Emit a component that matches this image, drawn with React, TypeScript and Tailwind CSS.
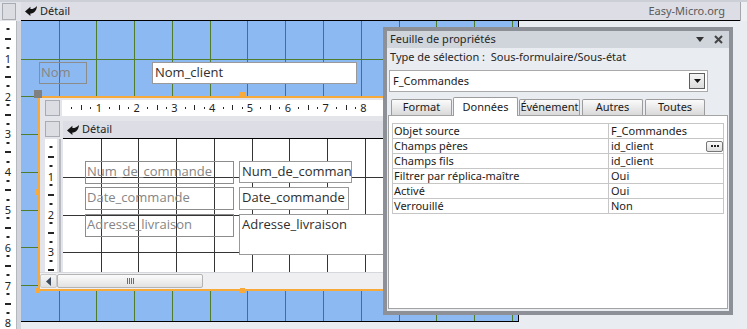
import React from "react";

const STEP = 37.8;
const range = (n: number) => Array.from({ length: n }, (_, i) => i);

function Corner({ className = "" }: { className?: string }) {
  return <div className={`shrink-0 border border-[#a9abb3] bg-[#dcdde3] ${className}`} />;
}

function SectionIcon() {
  return (
    <svg width="12" height="10" viewBox="0 0 12 10" className="shrink-0">
      <path d="M0 5.6 L5.4 0.8 V3.1 C8.2 3.1 10.4 1.9 12 0 C11.6 5 8.9 7.3 5.4 7.6 V10 Z" fill="#141414" />
    </svg>
  );
}

// règle verticale : tirets + chiffres
function VRuler({ n, labels }: { n: number; labels: number }) {
  return (
    <>
      {range(n).flatMap((k) =>
        [1, 2, 3].map((j) => (
          <div
            key={`${k}-${j}`}
            className={`absolute left-1/2 h-[2px] -translate-x-1/2 bg-[#262626] ${j === 2 ? "w-[6px]" : "w-[3px]"}`}
            style={{ top: k * STEP + j * 9.45 - 2 }}
          />
        ))
      )}
      {range(labels).map((k) => (
        <span
          key={k}
          className="absolute left-0 w-full text-center text-[11px] leading-[12px] text-[#222]"
          style={{ top: (k + 1) * STEP - 6 }}
        >
          {k + 1}
        </span>
      ))}
    </>
  );
}

function HRuler({ n }: { n: number }) {
  return (
    <>
      {range(n).flatMap((k) =>
        [1, 2, 3].map((j) => (
          <div
            key={`${k}-${j}`}
            className={`absolute w-[1px] bg-[#262626] ${j === 2 ? "top-[5px] h-[5px]" : "top-[7px] h-[2px]"}`}
            style={{ left: k * STEP + j * 9.45 }}
          />
        ))
      )}
      {range(n).map((k) => (
        <span
          key={k}
          className="absolute top-[1px] w-[12px] text-center text-[11px] leading-[14px] text-[#222]"
          style={{ left: (k + 1) * STEP - 7 }}
        >
          {k + 1}
        </span>
      ))}
    </>
  );
}

function Grid({ w, h, x0, y0, color }: { w: number; h: number; x0: number; y0: number; color: string }) {
  const xs: number[] = [];
  const ys: number[] = [];
  for (let k = 1; x0 + STEP * k < w; k++) xs.push(Math.round(x0 + STEP * k));
  for (let k = 1; y0 + STEP * k < h; k++) ys.push(Math.round(y0 + STEP * k));
  return (
    <svg width={w} height={h} className="absolute left-0 top-0">
      {xs.map((x) => (
        <rect key={`x${x}`} x={x} y={0} width={1} height={h} fill={color} />
      ))}
      {ys.map((y) => (
        <rect key={`y${y}`} x={0} y={y} width={w} height={1} fill={color} />
      ))}
    </svg>
  );
}

const FORM_FONT = "font-['Open_Sans',sans-serif] text-[13px] leading-[18px]";

function Label({ text, className }: { text: string; className: string }) {
  return (
    <div className={`absolute overflow-hidden whitespace-nowrap border border-[#8c8c8c] pl-[1px] text-[#858585] ${FORM_FONT} ${className}`}>
      {text}
    </div>
  );
}

function TextBox({ text, className }: { text: string; className: string }) {
  return (
    <div className={`absolute overflow-hidden whitespace-nowrap border border-[#999] bg-white pl-[2px] text-[#2e2e2e] ${FORM_FONT} ${className}`}>
      {text}
    </div>
  );
}

const ROWS = [
  ["Objet source", "F_Commandes"],
  ["Champs pères", "id_client"],
  ["Champs fils", "id_client"],
  ["Filtrer par réplica-maître", "Oui"],
  ["Activé", "Oui"],
  ["Verrouillé", "Non"],
];

const TABS = [
  { label: "Format", w: "w-[61px]", ml: "ml-0" },
  { label: "Données", w: "w-[65px]", ml: "ml-[1px]", active: true },
  { label: "Événement", w: "w-[61px]", ml: "ml-[1px]" },
  { label: "Autres", w: "w-[61px]", ml: "ml-[2px]" },
  { label: "Toutes", w: "w-[60px]", ml: "ml-[2px]" },
];

function PropertySheet() {
  return (
    <div className="absolute left-[383px] top-[27px] flex h-[288px] w-[350px] flex-col border-4 border-[#8d9096] bg-[#e9ecf0]">
      <div className="flex h-[17px] items-center bg-[#d0d5dc] pl-[3px] pr-[6px] text-[#262626]">
        <span>Feuille de propriétés</span>
        <svg width="8" height="5" viewBox="0 0 8 5" className="ml-auto">
          <path d="M0 0 H8 L4 5 Z" fill="#333" />
        </svg>
        <svg width="9" height="9" viewBox="0 0 9 9" className="ml-[10px]">
          <path d="M1 1 L8 8 M8 1 L1 8" stroke="#444" strokeWidth="2" />
        </svg>
      </div>
      <div className="flex h-[18px] items-center pl-[3px] text-[#262626]">
        Type de sélection :&nbsp;&nbsp;Sous-formulaire/Sous-état
      </div>
      <div className="ml-[2px] mt-[4px] flex h-[22px] w-[319px] items-center border border-[#a9a9a9] bg-white pl-[3px] pr-[2px]">
        <span>F_Commandes</span>
        <div className="ml-auto flex h-[16px] w-[16px] items-center justify-center border border-[#5e5e5e] bg-gradient-to-b from-[#f4f4f4] to-[#dcdcdc]">
          <svg width="7" height="4" viewBox="0 0 7 4">
            <path d="M0 0 H7 L3.5 4 Z" fill="#111" />
          </svg>
        </div>
      </div>
      <div className="mt-[4px] flex h-[19px] items-end pl-[4px]">
        {TABS.map((t) =>
          t.active ? (
            <div
              key={t.label}
              className={`relative z-10 -mb-px flex h-[19px] items-start justify-center rounded-t-[2px] border border-b-0 border-[#9c9c9c] bg-white pt-[1px] ${t.w} ${t.ml}`}
            >
              {t.label}
            </div>
          ) : (
            <div
              key={t.label}
              className={`flex h-[16px] items-center justify-center rounded-t-[2px] border border-b-0 border-[#9c9c9c] bg-gradient-to-b from-[#fbfbfb] to-[#d9d9d9] ${t.w} ${t.ml}`}
            >
              {t.label}
            </div>
          )
        )}
      </div>
      <div className="mx-[1px] h-[194px] border border-[#a3a3a3] bg-white pl-[3px] pt-[7px]">
        <div className="w-[332px] border-x border-t border-[#c6c6c6]">
          {ROWS.map(([k, v], i) => (
            <div key={k} className="flex h-[15px] border-b border-[#c6c6c6] leading-[14px]">
              <div className="w-[216px] border-r border-[#c6c6c6] pl-[1px]">{k}</div>
              <div className="flex flex-1 items-center pl-[2px]">
                <span>{v}</span>
                {i === 1 && (
                  <div className="ml-auto flex h-[11px] w-[17px] items-center justify-center gap-[1px] rounded-[2px] border border-[#777] bg-gradient-to-b from-[#fafafa] to-[#dedede]">
                    <div className="h-[2px] w-[2px] bg-[#222]" />
                    <div className="h-[2px] w-[2px] bg-[#222]" />
                    <div className="h-[2px] w-[2px] bg-[#222]" />
                  </div>
                )}
              </div>
            </div>
          ))}
        </div>
      </div>
    </div>
  );
}

function SubForm() {
  return (
    <div className="absolute left-[17px] top-[75px] flex h-[195px] w-[400px] flex-col border-2 border-[#f7a93a] bg-[#e4e5eb]">
      {/* règle horizontale */}
      <div className="mt-[2px] flex h-[16px] pl-[5px]">
        <Corner className="h-[16px] w-[15px]" />
        <div className="relative ml-[2px] flex-1 overflow-hidden bg-white">
          <HRuler n={8} />
        </div>
      </div>
      {/* en-tête de section */}
      <div className="mt-[5px] flex h-[18px] pl-[5px]">
        <Corner className="h-[16px] w-[15px]" />
        <div className="ml-[3px] flex flex-1 items-center border-b border-black bg-[#dcdde5] pl-[4px]">
          <SectionIcon />
          <span className="ml-[3px] text-[#1e1e1e]">Détail</span>
        </div>
      </div>
      {/* zone de détail */}
      <div className="flex h-[133px] pl-[5px]">
        <div className="relative w-[12px] overflow-hidden bg-white">
          <VRuler n={4} labels={3} />
        </div>
        <div className="w-[2px] bg-[#e4e5eb]" />
        <div className="w-[2px] bg-[#b8bac2]" />
        <div className="w-[2px] bg-[#e4e5eb]" />
        <div className="relative flex-1 overflow-hidden bg-white">
          <Grid w={330} h={133} x0={-0.3} y0={0} color="#353535" />
          <Label text="Num_de_commande" className="left-[22px] top-[22px] h-[23px] w-[149px]" />
          <TextBox text="Num_de_commande" className="left-[176px] top-[22px] h-[22px] w-[113px]" />
          <Label text="Date_commande" className="left-[22px] top-[48px] h-[23px] w-[149px]" />
          <TextBox text="Date_commande" className="left-[176px] top-[48px] h-[23px] w-[110px]" />
          <Label text="Adresse_livraison" className="left-[22px] top-[75px] h-[23px] w-[149px]" />
          <TextBox text="Adresse_livraison" className="left-[176px] top-[75px] h-[41px] w-[200px]" />
        </div>
      </div>
      {/* barre de défilement */}
      <div className="flex h-[17px] items-center border-t border-[#d6d7dc] bg-[#efeff1]">
        <div className="flex h-[14px] w-[17px] items-center justify-center rounded-[2px] border border-[#c9c9c9] bg-gradient-to-b from-[#f6f6f6] to-[#e0e0e0]">
          <svg width="5" height="9" viewBox="0 0 5 9">
            <path d="M5 0 V9 L0 4.5 Z" fill="#3d4a5c" />
          </svg>
        </div>
        <div className="flex h-[14px] w-[146px] items-center justify-center gap-[1px] rounded-[2px] border border-[#b3b3b3] bg-gradient-to-b from-[#fbfbfb] to-[#e2e2e2]">
          {range(4).map((i) => (
            <div key={i} className="h-[6px] w-[1px] bg-[#6e6e6e]" />
          ))}
        </div>
      </div>
    </div>
  );
}

export default function App() {
  return (
    <div className="relative h-[329px] w-[747px] overflow-hidden bg-[#e9ecf1] font-['Noto_Sans',sans-serif] text-[11px] text-[#1b1b1b]">
      {/* bandeau supérieur */}
      <div className="flex h-[21px] border-t-2 border-[#cdcfd7] bg-[#e3e4e9]">
        <div className="w-[21px] pl-[2px] pt-[1px]">
          <Corner className="h-[17px] w-[14px]" />
        </div>
        <div className="flex w-[719px] items-center border-b border-black bg-[#dcdde5] pl-[4px] pr-[15px]">
          <SectionIcon />
          <span className="ml-[3px] text-[#1e1e1e]">Détail</span>
          <span className="ml-auto text-[#5a5a5a]">Easy-Micro.org</span>
        </div>
        <div className="flex-1 border-l border-[#a4a6ae] bg-[#eef0f3]" />
      </div>

      <div className="flex h-[308px]">
        <div className="relative w-[16px] overflow-hidden bg-white">
          <VRuler n={8} labels={8} />
        </div>
        <div className="w-[5px] border-l border-[#b6b8c0] bg-[#d3d5dc]" />
        {/* surface du formulaire */}
        <div className="relative h-[301px] w-[498px] border-b border-r border-black bg-[#8db9f2]">
          <Grid w={497} h={300} x0={-0.3} y0={-0.3} color="#4f7d2c" />
          <Label text="Nom" className="left-[18px] top-[41px] h-[22px] w-[48px]" />
          <TextBox text="Nom_client" className="left-[131px] top-[41px] h-[22px] w-[205px]" />
          <SubForm />
          {/* poignées de sélection */}
          <div className="absolute left-[13px] top-[69px] h-[8px] w-[8px] bg-[#808080]" />
          <div className="absolute left-[219px] top-[71px] h-[5px] w-[5px] bg-[#f7a93a]" />
          <div className="absolute left-[14px] top-[168px] h-[6px] w-[4px] bg-[#f7a93a]" />
          <div className="absolute left-[14px] top-[267px] h-[5px] w-[5px] bg-[#f7a93a]" />
          <div className="absolute left-[219px] top-[267px] h-[5px] w-[5px] bg-[#f7a93a]" />
        </div>
      </div>

      <PropertySheet />
    </div>
  );
}
